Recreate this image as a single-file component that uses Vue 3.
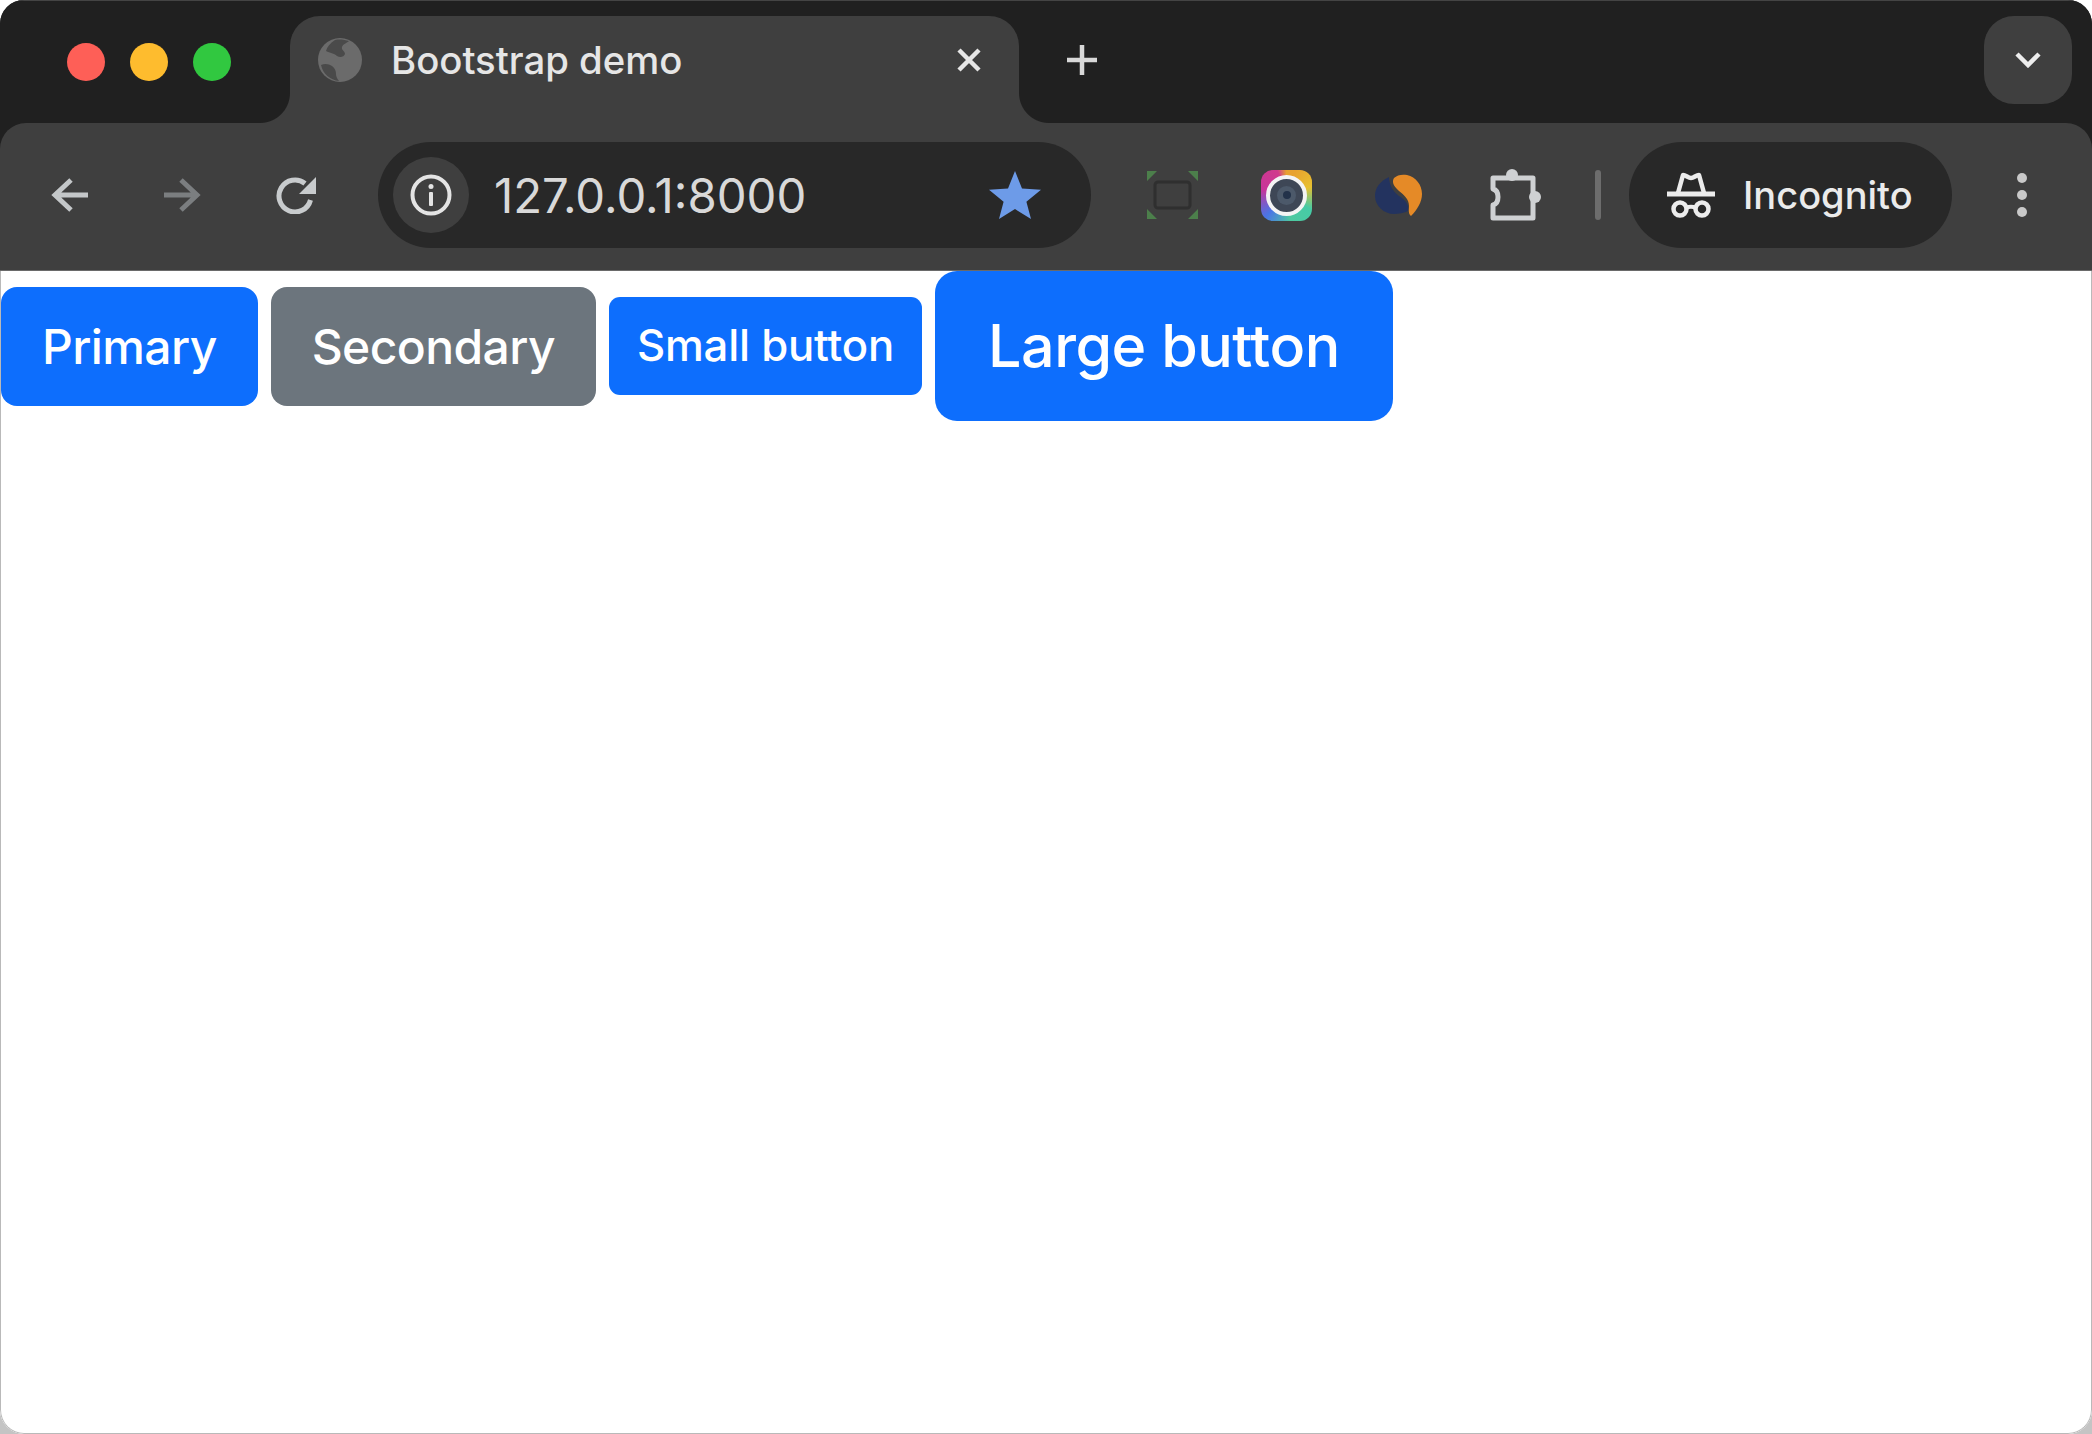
<script setup>
const buttons = [
  { label: 'Primary', cls: 'btn-primary' },
  { label: 'Secondary', cls: 'btn-secondary' },
  { label: 'Small button', cls: 'btn-primary btn-sm' },
  { label: 'Large button', cls: 'btn-primary btn-lg' },
]
</script>

<template>
  <div class="window">
    <header class="titlebar">
      <div class="lights">
        <span class="light red"></span>
        <span class="light yellow"></span>
        <span class="light green"></span>
      </div>
      <div class="tab">
        <svg class="favicon" viewBox="0 0 44 44">
          <circle cx="22" cy="22" r="22" fill="#6b6b6b" />
          <path d="M17 2C12 5 9 9 8 13c4 2 8 2 11 5 3 2 7 1 8-2 0-3-4-4-3-7 1-3 5-4 7-6-4-1-9-2-14-1zM3 27c4-2 8-1 11 1 3 2 4 5 4 8 0 2 1 5 3 7C12 42 5 36 3 27z" fill="#4a4a4a" />
        </svg>
        <span class="tab-title">Bootstrap demo</span>
        <svg class="tab-close" viewBox="0 0 26 26">
          <path d="M3 3l20 20M23 3L3 23" stroke="#e6e6e6" stroke-width="4.500" stroke-linecap="butt" fill="none" />
        </svg>
      </div>
      <svg class="new-tab" viewBox="0 0 32 32">
        <path d="M16 1v30M1 16h30" stroke="#d8d8d8" stroke-width="4.500" fill="none" />
      </svg>
      <div class="tab-search">
        <svg class="chevron" viewBox="0 0 26 16">
          <path d="M2 2l11 11L24 2" stroke="#ededed" stroke-width="4.500" stroke-linejoin="miter" fill="none" />
        </svg>
      </div>
    </header>

    <nav class="toolbar">
      <svg class="nav back" viewBox="0 0 38 36">
        <path d="M37 18H6M20 3L4 18l16 15" stroke="#c4c7c9" stroke-width="5" stroke-linejoin="miter" fill="none" />
      </svg>
      <svg class="nav forward" viewBox="0 0 38 36">
        <path d="M1 18h31M18 3l16 15-16 15" stroke="#7b7e80" stroke-width="5" stroke-linejoin="miter" fill="none" />
      </svg>
      <svg class="nav reload" viewBox="0 0 40 38">
        <path d="M34.500 24A16 16 0 1 1 29 7.500" stroke="#c8cbcd" stroke-width="5" fill="none" />
        <path d="M40 1v17H23z" fill="#c8cbcd" />
      </svg>
      <div class="omnibox">
        <span class="info-chip">
          <svg class="info" viewBox="0 0 42 42">
            <circle cx="21" cy="21" r="18.500" stroke="#e4e4e4" stroke-width="4" fill="none" />
            <circle cx="21" cy="12.500" r="2.500" fill="#e4e4e4" />
            <rect x="19" y="18" width="4" height="14" rx="1" fill="#e4e4e4" />
          </svg>
        </span>
        <span class="url">127.0.0.1:8000</span>
        <svg class="star" viewBox="0 0 52 48">
          <path d="M26 0l7 17.500 19 1.300-14.600 12L42 48 26 38 10 48l4.600-17.200L0 18.800l19-1.300z" fill="#6d9be8" />
        </svg>
      </div>
      <svg class="ext shot" viewBox="0 0 51 48">
        <g fill="#4c7f4b">
          <path d="M0 0h10L0 10zM51 0v10L41 0zM0 48V38l10 10zM51 48H41l10-10z" />
        </g>
        <rect x="8" y="11" width="35" height="26" rx="3" stroke="#2f2f2f" stroke-width="3" fill="none" />
      </svg>
      <div class="ext cam">
        <div class="cam-ring"><div class="cam-lens"><div class="cam-pupil"></div></div></div>
      </div>
      <svg class="ext swoosh" viewBox="0 0 48 42">
        <path d="M14 3C5 7 0 14 0 22c0 10 9 18 19 18 5 0 10-1 14-3 1-6-2-11-9-15C18 18 14 10 14 3z" fill="#23335f" />
        <path d="M19 4c3-3 8-4 13-3 9 2 15 10 15 19 0 8-5 16-11 22-3-2-2-7-2-10 0-7-5-11-10-15-4-4-8-8-5-13z" fill="#e58a27" />
      </svg>
      <svg class="ext puzzle" viewBox="0 0 52 52">
        <path d="M4 9H44V49H4V36c4-1 5-4 5-8s-1-7-5-8z" stroke="#cfd1d3" stroke-width="5" stroke-linejoin="round" fill="none" />
        <circle cx="23" cy="6" r="6" fill="#cfd1d3" />
        <circle cx="46" cy="28" r="6" fill="#cfd1d3" />
      </svg>
      <span class="divider"></span>
      <div class="incognito">
        <svg class="spy" viewBox="0 0 48 46">
          <path d="M0 22h48" stroke="#ececec" stroke-width="5" />
          <path d="M11 21l5-18c3 0 5 3 8 3s5-3 8-3l5 18" stroke="#ececec" stroke-width="4.500" stroke-linejoin="round" fill="none" />
          <circle cx="13" cy="37" r="6.500" stroke="#ececec" stroke-width="4.500" fill="none" />
          <circle cx="35" cy="37" r="6.500" stroke="#ececec" stroke-width="4.500" fill="none" />
          <path d="M19 36c3-1.500 7-1.500 10 0" stroke="#ececec" stroke-width="4" fill="none" />
        </svg>
        <span class="incognito-label">Incognito</span>
      </div>
      <div class="dots"><i></i><i></i><i></i></div>
    </nav>

    <main class="content">
      <button v-for="b in buttons" :key="b.label" class="btn" :class="b.cls">{{ b.label }}</button>
    </main>
  </div>
</template>

<style>
html, body { background: linear-gradient(#fff 50%, #c4c4c4 50%); }
</style>

<style scoped>
.window {
  width: 2092px;
  height: 1434px;
  display: flex;
  flex-direction: column;
  overflow: hidden;
  border-radius: 24px;
  background: linear-gradient(#202020 150px, #fff 150px);
  font-family: Inter, "Liberation Sans", sans-serif;
}
.titlebar {
  height: 123px;
  flex: none;
  display: flex;
  align-items: flex-start;
  background: #202020;
  border-top: 1px solid #444;
  box-sizing: border-box;
}
.lights {
  display: flex;
  gap: 25px;
  margin: 42px 0 0 67px;
}
.light { width: 38px; height: 38px; border-radius: 50%; }
.red { background: #fe5f57; }
.yellow { background: #febc2e; }
.green { background: #31c840; }
.tab {
  position: relative;
  box-sizing: border-box;
  width: 729px;
  height: 107px;
  margin: 15px 0 0 59px;
  padding: 0 37px 20px 28px;
  display: flex;
  align-items: center;
  background: #3f3f3f;
  border-radius: 30px 30px 0 0;
}
.tab::before,
.tab::after {
  content: "";
  position: absolute;
  bottom: 0;
  width: 30px;
  height: 30px;
}
.tab::before {
  left: -30px;
  background: radial-gradient(circle at 0 0, #202020 29.500px, #3f3f3f 30.500px);
}
.tab::after {
  right: -30px;
  background: radial-gradient(circle at 100% 0, #202020 29.500px, #3f3f3f 30.500px);
}
.favicon { width: 44px; height: 44px; flex: none; }
.tab-title {
  margin-left: 29px;
  color: #e6e6e6;
  font-size: 38.300px;
  font-weight: 500;
  white-space: nowrap;
}
.tab-close { width: 26px; height: 26px; margin-left: auto; flex: none; }
.new-tab { width: 32px; height: 32px; margin: 43px 0 0 47px; flex: none; }
.tab-search {
  width: 88px;
  height: 88px;
  margin: 15px 20px 0 auto;
  border-radius: 30px;
  background: #3f3f3f;
  display: flex;
  align-items: center;
  justify-content: center;
}
.chevron { width: 26px; height: 16px; }

.toolbar {
  box-sizing: border-box;
  height: 148px;
  flex: none;
  padding-bottom: 3px;
  display: flex;
  align-items: center;
  background: #3f3f3f;
  border-bottom: 1px solid #6a6a6a;
  border-radius: 26px 26px 0 0;
}
.nav { flex: none; }
.back { width: 38px; height: 36px; margin-left: 51px; }
.forward { width: 38px; height: 36px; margin-left: 74px; }
.reload { width: 40px; height: 38px; margin-left: 75px; }
.omnibox {
  box-sizing: border-box;
  width: 713px;
  height: 106px;
  margin-left: 62px;
  padding: 0 50px 0 15px;
  display: flex;
  align-items: center;
  background: #282828;
  border-radius: 53px;
  flex: none;
}
.info-chip {
  width: 76px;
  height: 76px;
  border-radius: 50%;
  background: #3f3f3f;
  display: flex;
  align-items: center;
  justify-content: center;
  flex: none;
}
.info { width: 42px; height: 42px; }
.url {
  margin-left: 25px;
  color: #d9d9d9;
  font-size: 47.300px;
  white-space: nowrap;
}
.star { width: 52px; height: 48px; margin-left: auto; flex: none; }
.ext { flex: none; }
.shot { width: 51px; height: 48px; margin-left: 56px; }
.cam {
  box-sizing: border-box;
  width: 51px;
  height: 51px;
  margin-left: 63px;
  border-radius: 12px;
  background: conic-gradient(#e8a22f 20deg, #e8c030 70deg, #46cba6 120deg, #4ec9a0 170deg, #4a74e6 225deg, #c8349a 285deg, #d03a8c 340deg, #e8a22f);
  display: flex;
  align-items: center;
  justify-content: center;
}
.cam-ring {
  box-sizing: border-box;
  width: 41px;
  height: 41px;
  border-radius: 50%;
  border: 4px solid #f4f4f4;
  background: #3e4756;
  display: flex;
  align-items: center;
  justify-content: center;
}
.cam-lens {
  width: 19px;
  height: 19px;
  border-radius: 50%;
  background: #4c596a;
  display: flex;
  align-items: center;
  justify-content: center;
}
.cam-pupil { width: 8px; height: 8px; border-radius: 50%; background: #23324a; }
.swoosh { width: 48px; height: 42px; margin-left: 63px; }
.puzzle { width: 52px; height: 52px; margin-left: 66px; }
.divider {
  width: 6px;
  height: 50px;
  margin-left: 54px;
  border-radius: 3px;
  background: #6d6d6d;
  flex: none;
}
.incognito {
  box-sizing: border-box;
  width: 323px;
  height: 106px;
  margin-left: 28px;
  padding-left: 38px;
  display: flex;
  align-items: center;
  background: #282828;
  border-radius: 53px;
  flex: none;
}
.spy { width: 48px; height: 46px; flex: none; }
.incognito-label {
  margin-left: 28px;
  color: #ebebeb;
  font-size: 38px;
  font-weight: 500;
  white-space: nowrap;
}
.dots {
  width: 10px;
  margin-left: 65px;
  display: flex;
  flex-direction: column;
  gap: 7px;
  flex: none;
}
.dots i { display: block; width: 10px; height: 10px; border-radius: 50%; background: #c9c9c9; }

.content {
  flex: 1;
  box-sizing: border-box;
  padding: 0;
  display: flex;
  gap: 13px;
  align-items: flex-start;
  background: #fff;
  border: solid #b9b9b9;
  border-width: 0 1px 1px;
  border-radius: 0 0 24px 24px;
}
.btn {
  border: 0;
  color: #fff;
  font-family: inherit;
  font-size: 48px;
  font-weight: 500;
  letter-spacing: -0.600px;
  line-height: 64px;
  height: 119px;
  margin-top: 16px;
  padding: 0 41px;
  border-radius: 16px;
  white-space: nowrap;
}
.btn-primary { background: #0d6efd; }
.btn-secondary { background: #6c757d; }
.btn-sm {
  height: 98px;
  margin-top: 26px;
  padding: 0 28px;
  font-size: 43.700px;
  letter-spacing: -0.200px;
  border-radius: 11px;
}
.btn-lg {
  height: 150px;
  margin-top: 0;
  padding: 0 53px;
  font-size: 59.200px;
  letter-spacing: -0.500px;
  border-radius: 22px;
}
</style>
